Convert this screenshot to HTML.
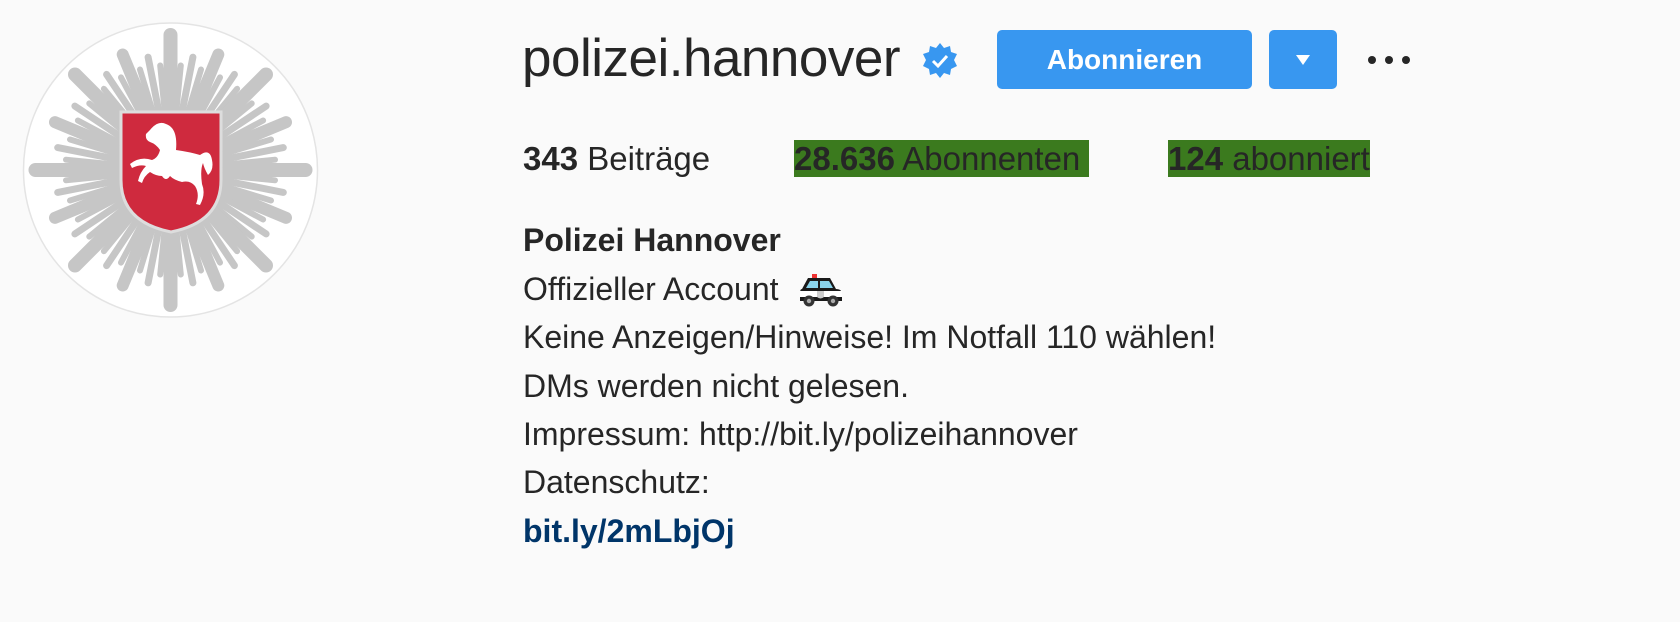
<!DOCTYPE html>
<html><head><meta charset="utf-8"><style>
body{margin:0;width:1680px;height:622px;background:#fafafa;font-family:"Liberation Sans",sans-serif;color:#262626;position:relative;overflow:hidden}
.a{position:absolute;white-space:nowrap}
.stat{font-size:33px;top:140px;line-height:37px;height:37px}
.bio{left:523px;font-size:32px;line-height:37px}
</style></head><body>
<svg class="a" style="left:0;top:0" width="340" height="340" viewBox="0 0 340 340">
<circle cx="170.5" cy="170" r="147" fill="#fff" stroke="#e4e4e4" stroke-width="1.5"/>
<g stroke="#c6c6c6" stroke-linecap="round" id="rays"></g>
<path d="M121 112 H221 V180 Q221 222 171 232 Q121 222 121 180 Z" fill="#cf2a3e" stroke="#ddd" stroke-width="3"/>
<path d="M150 130 Q158 120 166 124 Q178 128 176 150 Q190 152 200 155 Q210 148 212 160 Q214 170 208 175 Q204 168 203 163 Q200 170 202 184 Q206 194 200 205 L196 204 Q200 194 195 186 Q190 180 182 182 Q174 180 170 176 Q166 182 162 176 Q156 176 150 172 Q144 176 142 183 L138 181 Q140 172 146 166 Q140 164 132 168 L130 164 Q140 156 152 160 Q158 158 160 150 Q156 144 150 142 Q145 140 146 134 Z" fill="#fff"/>
</svg>
<script>
var g=document.getElementById('rays'),s='';
for(var i=0;i<64;i++){var a=i*Math.PI/32,r,w;
if(i%8==0){r=135;w=14}else if(i%4==0){r=125;w=12}else if(i%2==0){r=115;w=7}else{r=105;w=6}
var x1=170.5+45*Math.cos(a),y1=170+45*Math.sin(a),x2=170.5+r*Math.cos(a),y2=170+r*Math.sin(a);
s+='<line x1="'+x1.toFixed(1)+'" y1="'+y1.toFixed(1)+'" x2="'+x2.toFixed(1)+'" y2="'+y2.toFixed(1)+'" stroke-width="'+w+'"/>';}
g.innerHTML=s;
</script>
<div class="a" style="left:522px;top:28px;font-size:53px;line-height:62px;font-weight:300;letter-spacing:-0.5px">polizei.hannover</div>
<svg class="a" style="left:921px;top:42px" width="38" height="38" viewBox="0 0 38 38">
<polygon points="19,1 23,6 29,4 30,10 36,12 33,18 36,24 30,27 29,33 23,31 19,36 15,31 9,33 8,27 2,24 5,18 2,12 8,10 9,4 15,6" fill="#3897f0"/>
<path d="M12 19 L17 24 L26 14" fill="none" stroke="#fff" stroke-width="3"/>
</svg>
<div class="a" style="left:997px;top:30px;width:255px;height:59px;background:#3897f0;border-radius:5px;color:#fff;font-weight:bold;font-size:28px;line-height:59px;text-align:center">Abonnieren</div>
<div class="a" style="left:1269px;top:30px;width:68px;height:59px;background:#3897f0;border-radius:5px"></div>
<svg class="a" style="left:1295px;top:54px" width="16" height="12"><polygon points="1,1 15,1 8,11" fill="#fff"/></svg>
<svg class="a" style="left:1365px;top:52px" width="48" height="16"><circle cx="7" cy="8" r="4" fill="#262626"/><circle cx="24" cy="8" r="4" fill="#262626"/><circle cx="41" cy="8" r="4" fill="#262626"/></svg>
<div class="a stat" style="left:523px"><b>343</b> Beiträge</div>
<div class="a stat" style="left:794px;width:295px;background:#3b7a1e"><b>28.636</b> Abonnenten</div>
<div class="a stat" style="left:1168px;width:202px;background:#3b7a1e"><b>124</b> abonniert</div>
<div class="a bio" style="top:222px;font-weight:bold">Polizei Hannover</div>
<div class="a bio" style="top:271px">Offizieller Account</div>
<svg class="a" style="left:799px;top:273px" width="44" height="34" viewBox="0 0 44 34">
<rect x="13" y="1" width="5" height="4" fill="#e33"/>
<path d="M3 16 L9 5 H31 L37 16 Q43 16 43 21 V28 H1 V20 Q1 16 3 16Z" fill="#1a1a1a"/>
<path d="M11 8 H19 V15 H7Z M21 8 H30 L34 15 H21Z" fill="#8ad4ec"/>
<rect x="1" y="18" width="42" height="6" fill="#fff"/>
<path d="M18 18 h7 v6 q-3.5 3 -7 0z" fill="#ccc"/>
<circle cx="10" cy="28" r="5.5" fill="#333"/><circle cx="34" cy="28" r="5.5" fill="#333"/>
<circle cx="10" cy="28" r="2.2" fill="#aaa"/><circle cx="34" cy="28" r="2.2" fill="#aaa"/>
</svg>
<div class="a bio" style="top:319px">Keine Anzeigen/Hinweise! Im Notfall 110 wählen!</div>
<div class="a bio" style="top:368px">DMs werden nicht gelesen.</div>
<div class="a bio" style="top:416px">Impressum: http://bit.ly/polizeihannover</div>
<div class="a bio" style="top:464px">Datenschutz:</div>
<div class="a bio" style="top:513px;font-weight:bold;color:#003569">bit.ly/2mLbjOj</div>
</body></html>
